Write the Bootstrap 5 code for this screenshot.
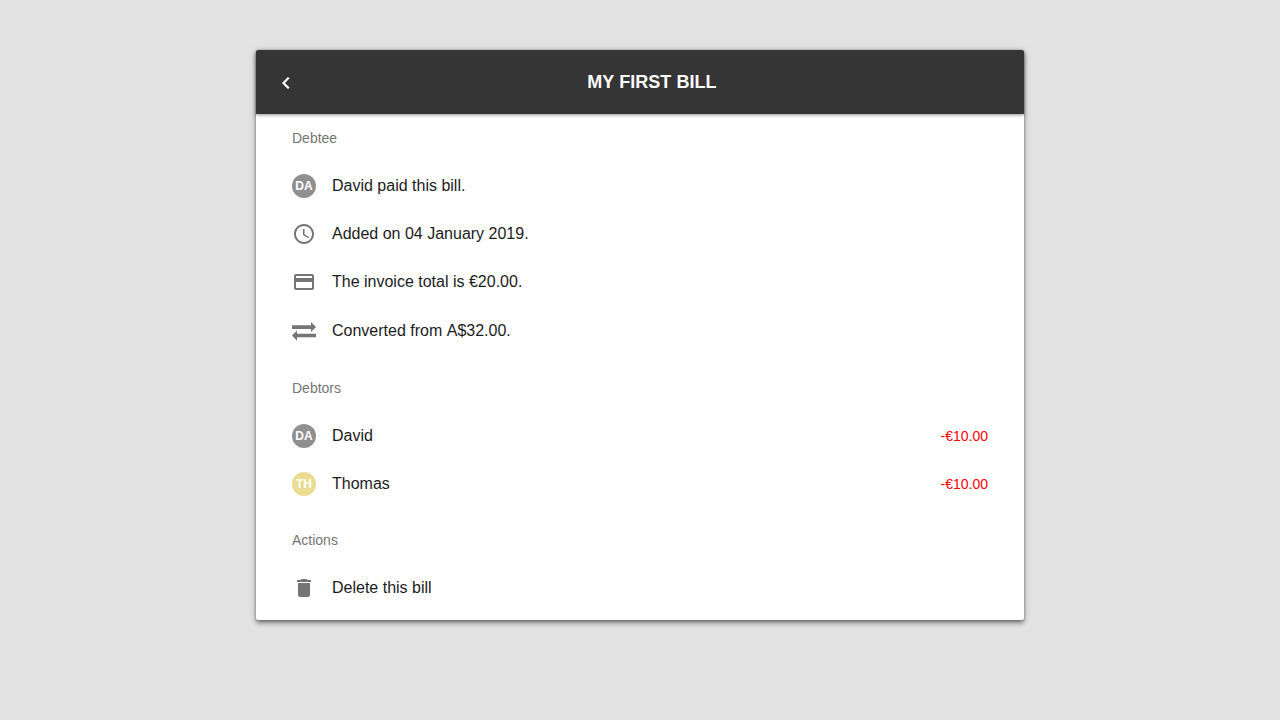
<!DOCTYPE html>
<html lang="en">
<head>
<meta charset="utf-8">
<meta name="viewport" content="width=device-width, initial-scale=1">
<title>My first bill</title>
<link rel="stylesheet" href="https://cdn.jsdelivr.net/npm/bootstrap@5.3.0/dist/css/bootstrap.min.css">
<style>
body { background: #e3e3e3; font-family: "Liberation Sans", Arial, sans-serif; color: #1c1c1c; }
.bill { width: 768px; border-radius: 2px; box-shadow: 0 3px 5px -1px rgba(0,0,0,.3), 0 4px 5px rgba(0,0,0,.14), 0 1px 10px rgba(0,0,0,.12), 0 1px 3px rgba(0,0,0,.25); }
.page { padding-top: 50px; }
.bill-header { height: 64px; padding: 0 24px 0 18px; background: #353535; border-radius: 2px 2px 0 0; box-shadow: 0 1px 4px rgba(0,0,0,.3), 0 1px 2px rgba(0,0,0,.15); }
.back { width: 24px; height: 24px; margin: 2px 6px 0 0; }
.bill-title { font-size: 18px; line-height: 24px; letter-spacing: .05px; }
.section { padding: 0 36px 8px; }
.section-title { height: 48px; font-size: 14px; line-height: 48px; color: #757575; }
.bill-row { height: 48px; font-size: 16px; line-height: 24px; gap: 16px; }
.bill-row.tall { height: 50px; }
.bill-row svg { color: #757575; }
.initials { width: 24px; height: 24px; font-size: 12px; line-height: 24px; background: #918f92; }
.initials.yellow { background: #ebdc92; }
.amount { font-size: 14px; color: #f00; }
</style>
</head>
<body>
<div class="page min-vh-100">
<main class="bill mx-auto bg-white">
  <header class="bill-header d-flex align-items-center text-white position-relative">
    <a href="#" class="back text-white d-flex" aria-label="Back"><svg width="24" height="24" viewBox="0 0 24 24" fill="currentColor" stroke="currentColor" stroke-width=".2"><path d="M15.410 7.410 14 6l-6 6 6 6 1.410-1.410L10.830 12z"/></svg></a>
    <h1 class="bill-title flex-grow-1 text-center text-uppercase fw-bold mb-0">My first bill</h1>
  </header>
  <section class="section">
    <div class="section-title">Debtee</div>
    <div class="bill-row d-flex align-items-center"><span class="initials rounded-circle text-white text-center fw-bold">DA</span><span>David paid this bill.</span></div>
    <div class="bill-row d-flex align-items-center"><svg width="24" height="24" viewBox="0 0 24 24" fill="currentColor"><path d="M11.99 2C6.47 2 2 6.48 2 12s4.47 10 9.99 10C17.52 22 22 17.52 22 12S17.52 2 11.99 2zM12 20c-4.42 0-8-3.58-8-8s3.58-8 8-8 8 3.58 8 8-3.58 8-8 8zm.5-13H11v6l5.25 3.15.75-1.23-4.5-2.67z"/></svg><span>Added on 04 January 2019.</span></div>
    <div class="bill-row d-flex align-items-center"><svg width="24" height="24" viewBox="0 0 24 24" fill="currentColor"><path d="M20 4H4c-1.11 0-1.99.89-1.99 2L2 18c0 1.11.89 2 2 2h16c1.11 0 2-.89 2-2V6c0-1.11-.89-2-2-2zm0 14H4v-6h16v6zm0-10H4V6h16v2z"/></svg><span>The invoice total is €20.00.</span></div>
    <div class="bill-row tall d-flex align-items-center"><svg width="24" height="24" viewBox="0 0 24 24" fill="currentColor"><path d="M0 6.300h19V3l5 5.100-5 5V10H0zM24 14.700v3.500H5v3.500l-5-5.200 5-5v3.200z"/></svg><span>Converted from&nbsp;A$32.00.</span></div>
  </section>
  <section class="section">
    <div class="section-title">Debtors</div>
    <div class="bill-row d-flex align-items-center"><span class="initials rounded-circle text-white text-center fw-bold">DA</span><span>David</span><span class="amount ms-auto">-€10.00</span></div>
    <div class="bill-row d-flex align-items-center"><span class="initials yellow rounded-circle text-white text-center fw-bold">TH</span><span>Thomas</span><span class="amount ms-auto">-€10.00</span></div>
  </section>
  <section class="section">
    <div class="section-title">Actions</div>
    <div class="bill-row d-flex align-items-center"><svg width="24" height="24" viewBox="0 0 24 24" fill="currentColor"><path d="M6 19c0 1.100.9 2 2 2h8c1.100 0 2-.9 2-2V7H6v12zM19 4h-3.500l-1-1h-5l-1 1H5v2h14V4z"/></svg><span>Delete this bill</span></div>
  </section>
</main>
</div>
<script src="https://cdn.jsdelivr.net/npm/bootstrap@5.3.0/dist/js/bootstrap.bundle.min.js"></script>
</body>
</html>
